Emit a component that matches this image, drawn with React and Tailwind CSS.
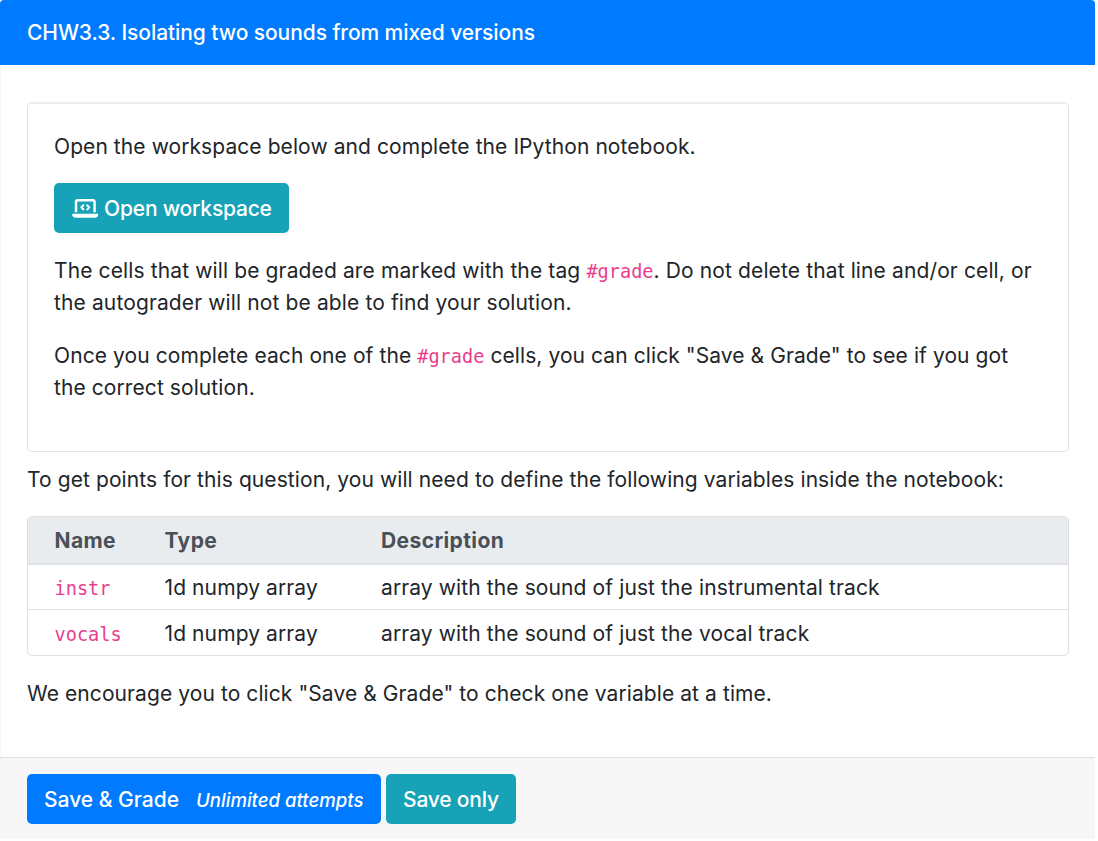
import React from "react";

function Code({ children }) {
  return (
    <code className="font-['DejaVu_Sans_Mono',monospace] text-[18.6px] leading-none tracking-normal text-[#e83e8c]">
      {children}
    </code>
  );
}

function LaptopCodeIcon() {
  return (
    <svg viewBox="0 0 26.6 21.3" className="mt-[1px] h-[21.3px] w-[26.6px] shrink-0" fill="none" stroke="currentColor" strokeLinecap="round" strokeLinejoin="round" aria-hidden="true">
      <path d="M4 14.200V3.900Q4 2.200 5.700 2.200H20.900Q22.600 2.200 22.600 3.900V14.200" strokeWidth="2.4" strokeLinecap="butt" />
      <path d="M11.400 7.300L9.300 9.400L11.400 11.500M15.200 7.300L17.300 9.400L15.200 11.500" strokeWidth="2" />
      <path d="M0.900 15.700H25.700Q26.500 15.700 26.500 16.500Q26.200 19.600 23 19.700H3.600Q0.400 19.600 0.100 16.500Q0.100 15.700 0.900 15.700Z" fill="currentColor" stroke="none" />
    </svg>
  );
}

const variables = [
  { name: "instr", type: "1d numpy array", description: "array with the sound of just the instrumental track" },
  { name: "vocals", type: "1d numpy array", description: "array with the sound of just the vocal track" },
];

export default function App() {
  return (
    <div className="h-[841px] w-[1098px] overflow-hidden bg-white font-['Inter',sans-serif] text-[21px] leading-8 tracking-[0.1px] text-[#212529]">
      <div className="flex h-[839px] w-[1095px] flex-col">
        <header className="flex h-[65px] shrink-0 items-center rounded-t-[4px] bg-[#007bff] px-[27px] font-medium tracking-[-0.08px] text-white">
          <h1 className="whitespace-nowrap">CHW3.3. Isolating two sounds from mixed versions</h1>
        </header>
        <main className="flex grow flex-col border-l border-[#f7f7f7] pr-[26px] pl-[26px] pt-[37px]">
          <section className="h-[350px] shrink-0 rounded-[5px] border border-t-2 border-[#e2e2e2] border-t-[#ededed] px-[26px] pt-[27px]">
            <p className="tracking-[0.08px]">Open the workspace below and complete the IPython notebook.</p>
            <button className="mt-[20px] flex h-[50px] w-[235px] items-center gap-[6px] rounded-[5px] bg-[#17a2b8] pl-[17.5px] font-medium tracking-[-0.2px] whitespace-nowrap text-white">
              <LaptopCodeIcon />
              <span className="pt-[2px]">Open workspace</span>
            </button>
            <p className="mt-[22px] whitespace-nowrap tracking-[0.125px]">
              The cells that will be graded are marked with the tag <Code>#grade</Code>. Do not delete that line and/or cell, or
              <br />
              the autograder will not be able to find your solution.
            </p>
            <p className="mt-[21px] whitespace-nowrap tracking-[0.085px]">
              Once you complete each one of the <Code>#grade</Code> cells, you can click "Save &amp; Grade" to see if you got
              <br />
              the correct solution.
            </p>
          </section>
          <p className="mt-[12px] whitespace-nowrap tracking-[0.09px]">
            To get points for this question, you will need to define the following variables inside the notebook:
          </p>
          <div className="mt-[20px] h-[140px] shrink-0 overflow-hidden rounded-[5px] border border-[#dfdfdf]">
            <div className="grid h-[48px] grid-cols-[110px_216.5px_1fr] items-center border-b-2 border-[#dee2e6] bg-[#e9ecef] pt-[2px] pl-[26.5px] font-bold tracking-[0.4px] text-[#495057]">
              <span>Name</span>
              <span>Type</span>
              <span>Description</span>
            </div>
            {variables.map((v) => (
              <div
                key={v.name}
                className="grid h-[44px] grid-cols-[110px_216.5px_1fr] items-center border-[#dee2e6] pt-[2px] pl-[26.5px] last:h-[47px] last:border-t"
              >
                <span><Code>{v.name}</Code></span>
                <span>{v.type}</span>
                <span className="tracking-[0.11px]">{v.description}</span>
              </div>
            ))}
          </div>
          <p className="mt-[22px] whitespace-nowrap tracking-[0.085px]">
            We encourage you to click "Save &amp; Grade" to check one variable at a time.
          </p>
        </main>
        <footer className="flex h-[82px] shrink-0 gap-[5px] border-t border-[#dfdfdf] bg-[#f7f7f7] pt-[16px] pl-[27px] font-medium tracking-normal text-white">
          <button className="flex h-[50px] w-[354px] items-center gap-[17px] rounded-[5px] bg-[#007bff] pt-[2px] pl-[17px] whitespace-nowrap">
            <span>Save &amp; Grade</span>
            <span className="text-[18.6px] italic">Unlimited attempts</span>
          </button>
          <button className="flex h-[50px] w-[130px] items-center justify-center rounded-[5px] bg-[#17a2b8] pt-[2px] tracking-[-0.2px] whitespace-nowrap">
            Save only
          </button>
        </footer>
      </div>
    </div>
  );
}
